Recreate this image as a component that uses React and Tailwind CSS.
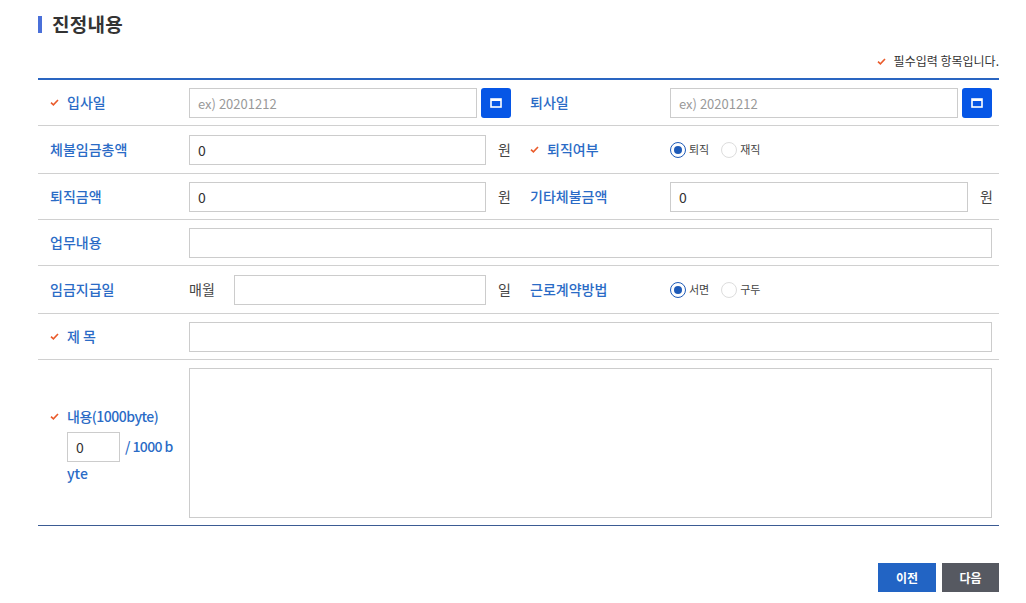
import { useState } from "react";

const FONT = { fontFamily: '"Noto Sans CJK KR", "Noto Sans", sans-serif' };

function Check() {
  return (
    <svg width="9" height="7" viewBox="0 0 9 7" className="shrink-0">
      <path d="M1 3.6 L3.4 5.8 L8 1" fill="none" stroke="#ea5b2b" strokeWidth="1.6" />
    </svg>
  );
}

function Label({ req, children }) {
  return (
    <div className="flex items-center pl-3 text-[14px] font-medium text-[#2a6bc6]">
      {req && (
        <span className="mr-[8px] flex items-center">
          <Check />
        </span>
      )}
      {children}
    </div>
  );
}

function CalButton() {
  return (
    <button className="w-[30px] h-[30px] rounded-[3px] bg-[#0656e6] flex items-center justify-center shrink-0">
      <svg width="12" height="10" viewBox="0 0 12 10">
        <rect x="1" y="1" width="10" height="8" fill="none" stroke="#fff" strokeWidth="1.6" />
        <rect x="1" y="1" width="10" height="2" fill="#fff" />
      </svg>
    </button>
  );
}

function TextInput({ value, placeholder, className = "" }) {
  return (
    <input
      defaultValue={value}
      placeholder={placeholder}
      className={`h-[30px] border border-[#cccccc] px-[8px] text-[14px] text-[#333] placeholder:text-[#999] placeholder:text-[13px] outline-none bg-white ${className}`}
    />
  );
}

function Radio({ checked, label, onClick }) {
  return (
    <label className="flex items-center cursor-pointer" onClick={onClick}>
      <span
        className={`w-[16px] h-[16px] rounded-full flex items-center justify-center ${
          checked ? "border-[1.5px] border-[#1e5bb8]" : "border border-[#dddddd]"
        }`}
      >
        {checked && <span className="w-[8px] h-[8px] rounded-full bg-[#1e5bb8]" />}
      </span>
      <span className="ml-[3px] text-[11px] text-[#444]">{label}</span>
    </label>
  );
}

export default function App() {
  const [retired, setRetired] = useState("퇴직");
  const [contract, setContract] = useState("서면");

  return (
    <div style={FONT} className="w-[1026px] h-[603px] bg-white text-[#333]">
      {/* Title */}
      <div className="flex items-center pt-[13px] pl-[38px]">
        <span className="w-[4px] h-[17px] bg-[#4a70d9]" />
        <h2 className="ml-[10px] text-[19px] font-bold text-[#333] leading-[22px] tracking-[0.3px]">진정내용</h2>
      </div>

      <div className="w-[961px] ml-[38px]">
        {/* Required note */}
        <div className="flex justify-end items-center mt-[18px] h-[16px] text-[12px] text-[#333]">
          <span className="mr-[8px] flex items-center">
            <Check />
          </span>
          필수입력 항목입니다.
        </div>

        {/* Table */}
        <div className="mt-[9px] border-t-2 border-[#2a65c1]">
          <div className="grid grid-cols-[151px_329px_152px_329px] h-[46px] border-b border-[#d0d0d0]">
            <Label req>입사일</Label>
            <div className="flex items-center pr-[7px] gap-[4px]">
              <TextInput placeholder="ex) 20201212" className="flex-1 min-w-0" />
              <CalButton />
            </div>
            <Label>퇴사일</Label>
            <div className="flex items-center pr-[7px] gap-[4px]">
              <TextInput placeholder="ex) 20201212" className="flex-1 min-w-0" />
              <CalButton />
            </div>
          </div>

          <div className="grid grid-cols-[151px_329px_152px_329px] h-[48px] border-b border-[#d0d0d0]">
            <Label>체불임금총액</Label>
            <div className="flex items-center pr-[7px]">
              <TextInput value="0" className="flex-1 min-w-0" />
              <span className="ml-[12px] text-[14px] text-[#444]">원</span>
            </div>
            <Label req>퇴직여부</Label>
            <div className="flex items-center gap-[12px]">
              <Radio checked={retired === "퇴직"} label="퇴직" onClick={() => setRetired("퇴직")} />
              <Radio checked={retired === "재직"} label="재직" onClick={() => setRetired("재직")} />
            </div>
          </div>

          <div className="grid grid-cols-[151px_329px_152px_329px] h-[46px] border-b border-[#d0d0d0]">
            <Label>퇴직금액</Label>
            <div className="flex items-center pr-[7px]">
              <TextInput value="0" className="flex-1 min-w-0" />
              <span className="ml-[12px] text-[14px] text-[#444]">원</span>
            </div>
            <Label>기타체불금액</Label>
            <div className="flex items-center pr-[6px]">
              <TextInput value="0" className="flex-1 min-w-0" />
              <span className="ml-[12px] text-[14px] text-[#444]">원</span>
            </div>
          </div>

          <div className="grid grid-cols-[151px_810px] h-[46px] border-b border-[#d0d0d0]">
            <Label>업무내용</Label>
            <div className="flex items-center pr-[7px]">
              <TextInput className="flex-1 min-w-0" />
            </div>
          </div>

          <div className="grid grid-cols-[151px_329px_152px_329px] h-[48px] border-b border-[#d0d0d0]">
            <Label>임금지급일</Label>
            <div className="flex items-center pr-[7px]">
              <span className="w-[45px] text-[14px] text-[#444]">매월</span>
              <TextInput className="flex-1 min-w-0" />
              <span className="ml-[12px] text-[14px] text-[#444]">일</span>
            </div>
            <Label>근로계약방법</Label>
            <div className="flex items-center gap-[12px]">
              <Radio checked={contract === "서면"} label="서면" onClick={() => setContract("서면")} />
              <Radio checked={contract === "구두"} label="구두" onClick={() => setContract("구두")} />
            </div>
          </div>

          <div className="grid grid-cols-[151px_810px] h-[46px] border-b border-[#d0d0d0]">
            <Label req>
              <span className="tracking-[3px]">제목</span>
            </Label>
            <div className="flex items-center pr-[7px]">
              <TextInput className="flex-1 min-w-0" />
            </div>
          </div>

          <div className="grid grid-cols-[151px_810px] h-[166px] border-b border-[#3b5b93]">
            <div className="flex items-center pl-3">
              <div className="flex items-start mt-[4px]">
                <span className="mr-[8px] mt-[6px] flex items-center">
                  <Check />
                </span>
                <div className="text-[14px] font-medium text-[#2a6bc6] w-[80px] leading-[19px]">
                  <div className="whitespace-nowrap tracking-[-0.5px]">내용(1000byte)</div>
                  <div className="flex items-center mt-[6px] whitespace-nowrap">
                    <input
                      defaultValue="0"
                      className="w-[53px] h-[30px] border border-[#cccccc] px-[8px] text-[14px] text-[#333] outline-none font-normal"
                    />
                    <span className="ml-[5px] tracking-[-0.6px]">/ 1000 b</span>
                  </div>
                  <div className="mt-[2px]">yte</div>
                </div>
              </div>
            </div>
            <div className="flex items-center pr-[7px]">
              <textarea className="w-full h-[150px] border border-[#cccccc] resize-none outline-none p-2 text-[14px]" />
            </div>
          </div>
        </div>

        {/* Buttons */}
        <div className="flex justify-end gap-[6px] mt-[37px]">
          <button className="w-[58px] h-[29px] bg-[#2264c4] text-white text-[12px] font-bold">이전</button>
          <button className="w-[57px] h-[29px] bg-[#565961] text-white text-[12px] font-bold">다음</button>
        </div>
      </div>
    </div>
  );
}
